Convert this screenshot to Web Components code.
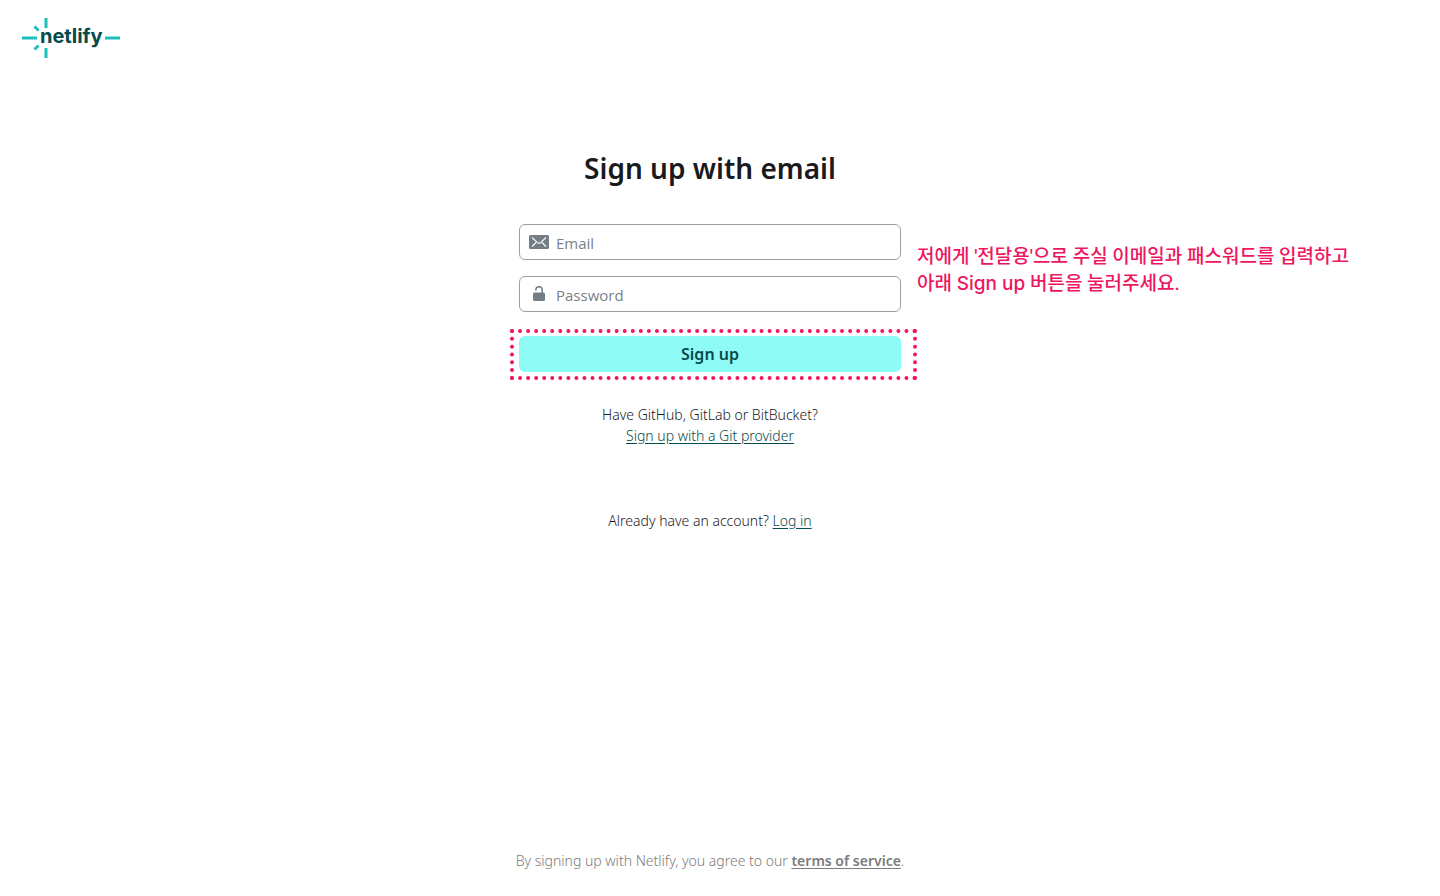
<!DOCTYPE html>
<html lang="en">
<head>
<meta charset="utf-8">
<meta name="viewport" content="width=device-width, initial-scale=1">
<title>Sign up with email | Netlify</title>
<style>
  html { background: #fff; }
  body { margin: 0; color: #1a1a1d; font: 14px/21px "Noto Sans", "Noto Sans CJK KR", sans-serif; }
</style>
</head>
<body>
<signup-page>
  <netlify-logo slot="header"></netlify-logo>
  <span slot="title">Sign up with email</span>
  <signup-form></signup-form>
  <help-text>Have GitHub, GitLab or BitBucket?<br><text-link href="#git">Sign up with a Git provider</text-link></help-text>
  <help-text class="login">Already have an account? <text-link href="#login">Log in</text-link></help-text>
  <terms-note slot="footer"></terms-note>
</signup-page>

<script>
const define = (name, html, setup) => {
  const template = document.createElement('template');
  template.innerHTML = html;
  customElements.define(name, class extends HTMLElement {
    constructor() {
      super();
      this.attachShadow({ mode: 'open' }).append(template.content.cloneNode(true));
    }
    connectedCallback() { if (setup) setup(this, this.shadowRoot); }
  });
};

define('signup-page', `
  <style>
    :host { display: flex; flex-direction: column; min-height: 100vh; box-sizing: border-box; padding-right: 20px; }
    header { padding: 18px 22px 0; height: 40px; }
    main { display: flex; flex-direction: column; align-items: center; flex: 1; padding-top: 90px; }
    h1 { margin: 0 0 36px; font-size: 28px; line-height: 40px; font-weight: 600; }
    ::slotted(signup-form) { width: 382px; max-width: 100%; margin-bottom: 32px; }
    ::slotted(.login) { margin-top: 64px; }
    footer { padding-bottom: 25px; text-align: center; }
  </style>
  <header><slot name="header"></slot></header>
  <main><h1><slot name="title"></slot></h1><slot></slot></main>
  <footer><slot name="footer"></slot></footer>`);

define('netlify-logo', `
  <style>
    :host { display: block; width: 98px; height: 40px; }
    a, svg { display: block; }
    text { font: 700 20px Inter, sans-serif; fill: #064b4b; }
  </style>
  <a href="#home" aria-label="Netlify">
    <svg width="98" height="40" viewBox="0 0 98 40">
      <g fill="none" stroke="#1cc0bb" stroke-width="3">
        <path d="M24 0v10M24 30v10M0 20h15M83 20h15"/>
        <path d="M12.5 8.5l4 4M12.5 31.5l4-4"/>
      </g>
      <text x="18" y="25">netlify</text>
    </svg>
  </a>`);

define('icon-field', `
  <style>
    :host { display: block; }
    label { display: flex; align-items: center; box-sizing: border-box; height: 36px; padding: 0 9px; gap: 7px; border: 1px solid #9c9fa3; border-radius: 6px; background: #fff; color: #747c84; }
    label:focus-within { border-color: #064b4b; }
    ::slotted(svg) { display: block; flex: none; }
    input { flex: 1; min-width: 0; height: 34px; padding: 2px 0 0; box-sizing: border-box; border: 0; outline: 0; background: none; font: 15px/24px "Open Sans", sans-serif; color: #1a1a1d; }
    input::placeholder { color: #7b8187; opacity: 1; }
  </style>
  <label><slot></slot><input></label>`, (host, root) => {
    const input = root.querySelector('input');
    input.type = host.getAttribute('type');
    input.placeholder = host.getAttribute('label');
    input.setAttribute('aria-label', host.getAttribute('label'));
  });

define('callout-frame', `
  <style>
    :host { display: block; position: relative; }
    .frame { position: absolute; inset: -7px -16px -8px -9px; border: 4px dotted #ee1660; pointer-events: none; }
  </style>
  <slot></slot><div class="frame"></div>`);

define('callout-note', `
  <style>
    :host { position: absolute; left: calc(100% + 16px); top: 19px; white-space: nowrap; color: #ee1660; font: 500 19px/27px Roboto, "Noto Sans CJK KR", sans-serif; }
    ::slotted(b) { font-family: Inter, sans-serif; font-weight: 500; }
  </style>
  <slot></slot>`);

define('signup-form', `
  <style>
    :host { display: block; position: relative; }
    form { display: flex; flex-direction: column; gap: 16px; }
    callout-frame { margin-top: 8px; }
    button { display: block; width: 100%; height: 36px; padding: 0; border: 0; border-radius: 6px; background: #8efbf7; color: #064b4b; font: 600 16px/24px "Noto Sans", sans-serif; cursor: pointer; }
  </style>
  <form>
    <icon-field type="email" label="Email">
      <svg width="20" height="14" viewBox="0 0 20 14" aria-hidden="true">
        <rect width="20" height="14" rx="1.5" fill="#747c84"/>
        <path d="M3 2.5l5.5 5.2q1.5 1.2 3 0L17 2.5M3 11.5l4-4M17 11.5l-4-4" fill="none" stroke="#fff" stroke-width="1.1"/>
      </svg>
    </icon-field>
    <icon-field type="password" label="Password">
      <svg width="20" height="16" viewBox="0 0 20 16" aria-hidden="true">
        <rect x="4" y="6.5" width="12" height="8.5" rx="1.5" fill="#747c84"/>
        <path d="M6.8 4.4V4a3.2 3.2 0 0 1 6.4 0V7" fill="none" stroke="#747c84" stroke-width="1.5"/>
      </svg>
    </icon-field>
    <callout-frame><button type="submit">Sign up</button></callout-frame>
  </form>
  <callout-note lang="ko">저에게 '전달용'으로 주실 이메일과 패스워드를 입력하고<br>아래 <b>Sign up</b> 버튼을 눌러주세요.</callout-note>`);

define('help-text', `
  <style>:host { display: block; text-align: center; font-weight: 300; }</style>
  <slot></slot>`);

define('text-link', `
  <style>
    :host { display: inline; }
    a { color: #064b4b; text-decoration: underline; text-underline-offset: 2px; }
  </style>
  <a><slot></slot></a>`, (host, root) => {
    root.querySelector('a').href = host.getAttribute('href');
  });

define('terms-note', `
  <style>
    :host { display: block; font-weight: 300; color: #7c7c7c; }
    a { color: inherit; font-weight: 600; text-decoration-thickness: 1px; text-underline-offset: 2px; }
  </style>
  By signing up with Netlify, you agree to our <a href="#terms">terms of service</a>.`);
</script>
</body>
</html>
